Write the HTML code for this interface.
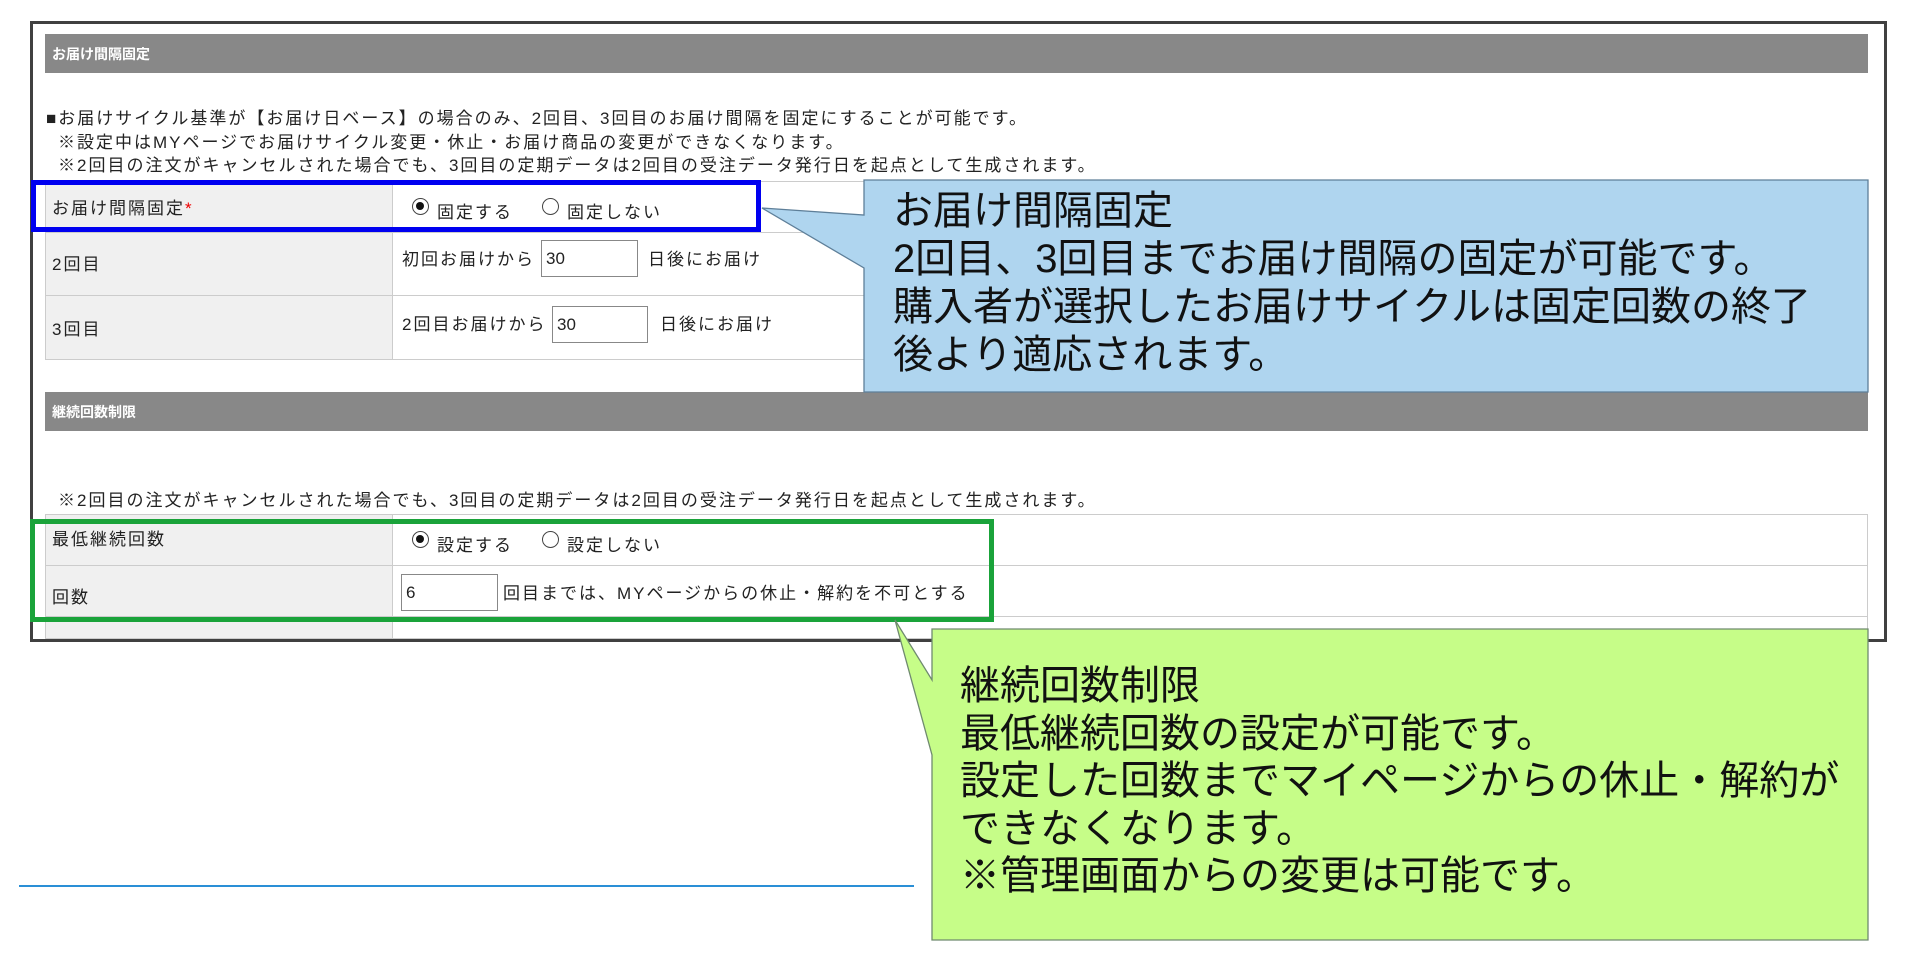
<!DOCTYPE html>
<html><head><meta charset="utf-8"><style>
*{margin:0;padding:0;box-sizing:border-box}
body{width:1908px;height:964px;background:#fff;position:relative;overflow:hidden;font-family:"Liberation Sans","Noto Sans CJK JP",sans-serif;color:#222}
.a{position:absolute;white-space:nowrap}
.frame{left:30px;top:21px;width:1857px;height:621px;border:3px solid #404040}
.hdr{left:45px;width:1823px;height:39px;background:#888;color:#fff;font-size:14px;font-weight:bold;padding:10px 7px}
.t{font-size:17px;letter-spacing:2px;color:#222}
.cell{border:1px solid #ccc}
.lab{background:#f0f0f0}
.inp{border:1px solid #888;background:#fff;font-size:17px;padding:8px 4px;height:37px;line-height:20px}
.rad{width:17px;height:17px;border:1.5px solid #444;border-radius:50%;background:#fff}
.rad.on::after{content:"";position:absolute;left:3px;top:3px;width:8px;height:8px;border-radius:50%;background:#111}
.big{font-size:40px;line-height:48px;color:#111}
</style></head><body>
<div class="a frame"></div>
<div class="a hdr" style="top:34px">お届け間隔固定</div>
<div class="a t" style="left:46px;top:104px">■お届けサイクル基準が【お届け日ベース】の場合のみ、2回目、3回目のお届け間隔を固定にすることが可能です。</div>
<div class="a t" style="left:58px;top:128px">※設定中はMYページでお届けサイクル変更・休止・お届け商品の変更ができなくなります。</div>
<div class="a t" style="left:58px;top:151px">※2回目の注文がキャンセルされた場合でも、3回目の定期データは2回目の受注データ発行日を起点として生成されます。</div>
<div class="a cell lab" style="left:45px;top:181px;width:348px;height:52px"></div>
<div class="a cell" style="left:392px;top:181px;width:1476px;height:52px"></div>
<div class="a cell lab" style="left:45px;top:232px;width:348px;height:64px"></div>
<div class="a cell" style="left:392px;top:232px;width:1476px;height:64px"></div>
<div class="a cell lab" style="left:45px;top:295px;width:348px;height:65px"></div>
<div class="a cell" style="left:392px;top:295px;width:1476px;height:65px"></div>
<div class="a t" style="left:52px;top:194px">お届け間隔固定<span style="color:#e00">*</span></div>
<div class="a rad on" style="left:412px;top:198px"></div><div class="a t" style="left:437px;top:198px">固定する</div>
<div class="a rad" style="left:542px;top:198px"></div><div class="a t" style="left:567px;top:198px">固定しない</div>
<div class="a t" style="left:52px;top:250px">2回目</div>
<div class="a t" style="left:402px;top:245px">初回お届けから</div>
<div class="a inp" style="left:541px;top:240px;width:97px">30</div>
<div class="a t" style="left:648px;top:245px">日後にお届け</div>
<div class="a t" style="left:52px;top:315px">3回目</div>
<div class="a t" style="left:402px;top:310px">2回目お届けから</div>
<div class="a inp" style="left:552px;top:306px;width:96px">30</div>
<div class="a t" style="left:660px;top:310px">日後にお届け</div>
<div class="a" style="left:31px;top:180px;width:730px;height:52px;border:5px solid #0000f0"></div>
<div class="a hdr" style="top:392px">継続回数制限</div>
<div class="a t" style="left:58px;top:486px">※2回目の注文がキャンセルされた場合でも、3回目の定期データは2回目の受注データ発行日を起点として生成されます。</div>
<div class="a cell lab" style="left:45px;top:514px;width:348px;height:52px"></div>
<div class="a cell" style="left:392px;top:514px;width:1476px;height:52px"></div>
<div class="a cell lab" style="left:45px;top:565px;width:348px;height:52px"></div>
<div class="a cell" style="left:392px;top:565px;width:1476px;height:52px"></div>
<div class="a cell lab" style="left:45px;top:616px;width:348px;height:23px"></div>
<div class="a cell" style="left:392px;top:616px;width:1476px;height:23px"></div>
<div class="a t" style="left:52px;top:525px">最低継続回数</div>
<div class="a rad on" style="left:412px;top:531px"></div><div class="a t" style="left:437px;top:531px">設定する</div>
<div class="a rad" style="left:542px;top:531px"></div><div class="a t" style="left:567px;top:531px">設定しない</div>
<div class="a t" style="left:52px;top:583px">回数</div>
<div class="a inp" style="left:401px;top:574px;width:97px">6</div>
<div class="a t" style="left:503px;top:579px">回目までは、MYページからの休止・解約を不可とする</div>
<div class="a" style="left:30px;top:519px;width:964px;height:103px;border:5px solid #1aa33a"></div>
<div class="a" style="left:19px;top:885px;width:895px;height:2px;background:#2a8fd6"></div>
<svg class="a" style="left:0;top:0" width="1908" height="964">
<polygon points="864,180 1868,180 1868,392 864,392 864,268 762,208 864,215" fill="#afd5ef" stroke="#5e7f99" stroke-width="1.3"/>
<polygon points="932,629 1868,629 1868,940 932,940 932,755 895,620 932,680" fill="#c6fd88" stroke="#6f8a6f" stroke-width="1.3"/>
</svg>
<div class="a big" style="left:893px;top:187px">お届け間隔固定<br>2回目、3回目までお届け間隔の固定が可能です。<br>購入者が選択したお届けサイクルは固定回数の終了<br>後より適応されます。</div>
<div class="a big" style="left:960px;top:663px;line-height:47.5px">継続回数制限<br>最低継続回数の設定が可能です。<br>設定した回数までマイページからの休止・解約が<br>できなくなります。<br>※管理画面からの変更は可能です。</div>
</body></html>
